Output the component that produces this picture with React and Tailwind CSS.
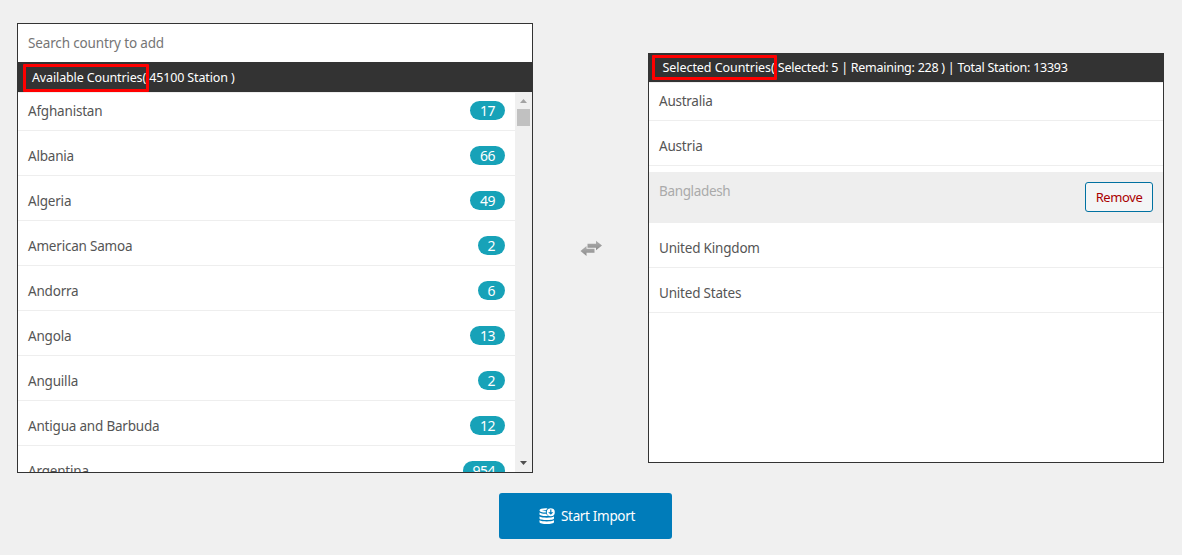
const available = [
  ["Afghanistan", 17],
  ["Albania", 66],
  ["Algeria", 49],
  ["American Samoa", 2],
  ["Andorra", 6],
  ["Angola", 13],
  ["Anguilla", 2],
  ["Antigua and Barbuda", 12],
  ["Argentina", 954],
];

function Row({ name, count, first }) {
  return (
    <li className={`flex shrink-0 justify-between border-b border-[#eee] px-[10px] ${first ? "h-[38px] pt-[8px]" : "h-[45px] pt-[15px]"}`}>
      <span className="h-5 leading-5 tracking-[-0.2px]">{name}</span>
      {count !== undefined && (
        <span className="h-[19px] rounded-full bg-[#17a2b8] px-[9.8px] text-[14px] leading-[20px] tracking-[-0.4px] text-white">{count}</span>
      )}
    </li>
  );
}

function ImportIcon() {
  return (
    <svg className="size-4" viewBox="0 0 16 16" fill="#fff">
      <path d="M.5 2.200C.5 1 3 .2 6.500.2c.8 0 1.500 0 2 .2L6.900 2.200l-4-.3 4 1.400v1.300C3.500 4.700.5 3.700.5 2.200Z" />
      <path d="M.5 4.500c1.500 1 4 1.300 6.700 1.200.4 1 1.100 1.700 2 2.200C5.500 8.500.5 7.700.5 6.300ZM.5 8.600c2.500 1.600 12 1.600 14.500 0v1.900c0 2-14.500 2-14.500 0ZM.5 12.200c2.500 1.600 12 1.600 14.500 0v1.700c0 2.800-14.500 2.800-14.500 0Z" />
      <path fillRule="evenodd" d="M11.800.2a4 4 0 1 1 0 8 4 4 0 0 1 0-8Zm-.6 1.300v2.700H9.200l2.600 2.600 2.600-2.600h-2V1.500Z" />
    </svg>
  );
}

export default function App() {
  return (
    <main className="h-[555px] w-[1182px] overflow-hidden bg-[#f0f0f0] pt-[23px] font-['Noto_Sans','Liberation_Sans',sans-serif] text-[13.5px] text-[#555]">
      <div className="flex items-start pl-[17px]">
        <section className="flex h-[450px] w-[516px] flex-col overflow-hidden border border-[#333] bg-white">
          <input aria-label="Search country" placeholder="Search country to add" className="h-[38px] shrink-0 px-[10px] text-[13.5px] tracking-[-0.15px] outline-none placeholder:text-[#757575]" />
          <header className="relative h-[30px] shrink-0 bg-[#333] pl-[14px] text-[12.5px] leading-[31px] tracking-[-0.13px] text-white">
            Available Countries( 45100 Station )
            <span className="absolute top-[2px] left-[5px] h-[28px] w-[126px] rounded-[1px] border-3 border-[#f00]" />
          </header>
          <div className="flex min-h-0 flex-1 border-t border-[#eee]">
            <ul className="flex flex-1 flex-col overflow-hidden">
              {available.map(([name, count], i) => <Row key={name} name={name} count={count} first={i === 0} />)}
            </ul>
            <div className="flex w-[17px] flex-col items-center bg-[#f0f0f0] pt-[6px] pb-[7px]">
              <svg className="h-1 w-[7px]" viewBox="0 0 7 4" fill="#a3a3a3"><path d="M0 4 3.500 0 7 4Z" /></svg>
              <div className="mt-[6px] h-[17px] w-[13px] bg-[#c1c1c1]" />
              <svg className="mt-auto h-1 w-[7px]" viewBox="0 0 7 4" fill="#505050"><path d="M0 0h7L3.500 4Z" /></svg>
            </div>
          </div>
        </section>
        <div className="flex w-[115px] justify-center pt-[217px]">
          <svg className="h-[16px] w-[22px]" viewBox="0 0 22 16">
            <defs>
              <linearGradient id="arrow" x2="0" y2="1"><stop stopColor="#b0b0b0" /><stop offset="1" stopColor="#8c8c8c" /></linearGradient>
            </defs>
            <path fill="url(#arrow)" d="M7.500 3.800H16V.7L22 5.500 16 10.300V7.700H7.500Z" />
            <path fill="url(#arrow)" d="M14.500 12.700H6.500V16L.5 10.900l6-4.900V8.800h8Z" />
          </svg>
        </div>
        <section className="mt-[30px] h-[410px] w-[516px] border border-[#333] bg-white">
          <header className="relative h-[28px] bg-[#333] pl-[13.5px] text-[12.5px] leading-[28px] tracking-[-0.26px] text-white">
            <span className="tracking-[-0.06px]">Selected Countries( </span>Selected: 5 | Remaining: 228 ) | Total Station: 13393
            <span className="absolute top-px left-[3px] h-[25px] w-[125px] rounded-[1px] border-3 border-[#f00]" />
          </header>
          <ul className="flex flex-col border-t border-[#eee]">
            <li className="h-[38px] border-b border-[#eee] px-[10px] pt-[8px] leading-5 tracking-[-0.25px]">Australia</li>
            <Row name="Austria" />
            <li className="mt-[6px] flex h-[51px] justify-between bg-[#eee] px-[10px] pt-[10px] text-[#aaa]">
              <span className="h-5 leading-[18px] tracking-[-0.35px]">Bangladesh</span>
              <button className="h-[30px] w-[68px] rounded-[3px] border border-[#0071a1] bg-[#f3f5f6] pt-px text-[13px] tracking-[-0.4px] text-[#a00]">Remove</button>
            </li>
            <Row name="United Kingdom" />
            <Row name="United States" />
          </ul>
        </section>
      </div>
      <div className="mt-[20px] pl-[499px]">
        <button className="flex h-[46px] w-[173px] items-center gap-[6px] rounded-[3px] bg-[#007cba] pl-[40px] text-[13.5px] tracking-[-0.33px] text-white">
          <ImportIcon />
          Start Import
        </button>
      </div>
    </main>
  );
}
